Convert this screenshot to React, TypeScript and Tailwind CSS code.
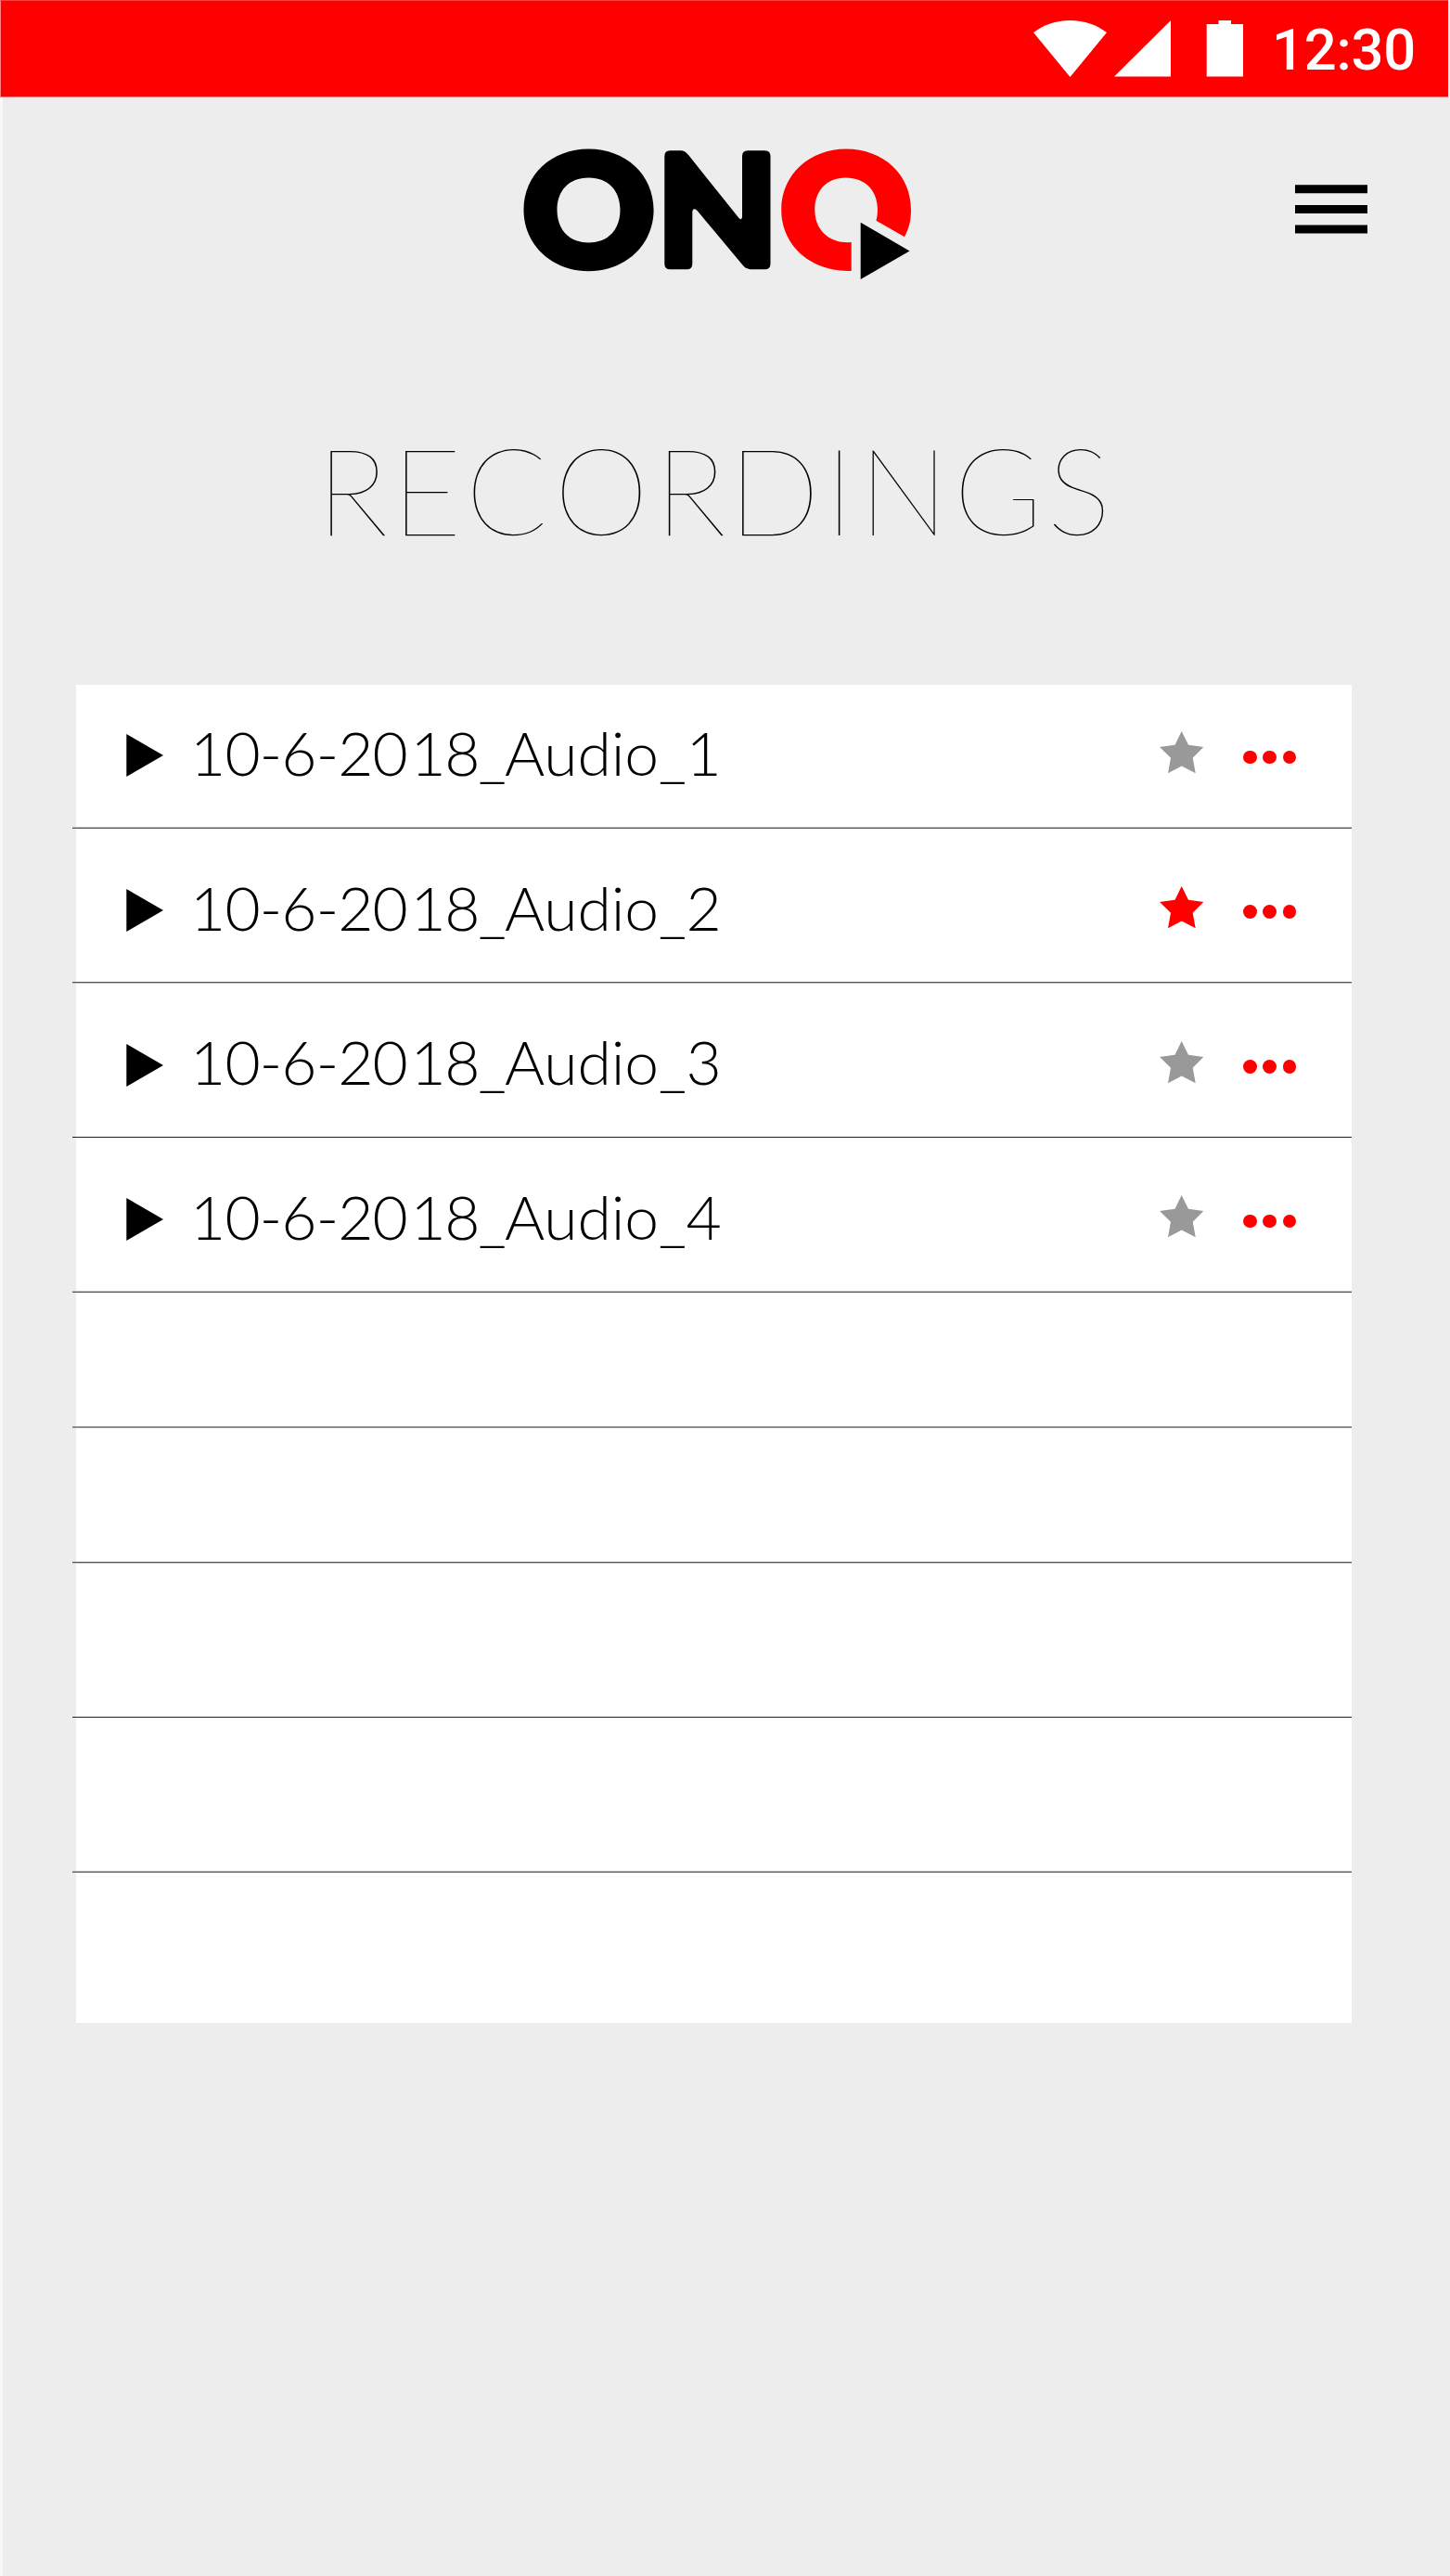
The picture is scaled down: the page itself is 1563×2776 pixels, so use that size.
const LETTER_O =
  "M84.500 20.600C124 20.600 154.600 48 154.600 86.300C154.600 124 124 152.200 84.500 152.200C45 152.200 14.500 124 14.500 86.300C14.500 48 45 20.600 84.500 20.600ZM84.500 51.400C63 51.400 50.500 65.500 50.500 86.300C50.500 107 63 121.400 84.500 121.400C106 121.400 118.500 107 118.500 86.300C118.500 65.500 106 51.400 84.500 51.400Z";

function StatusBar() {
  return (
    <div className="h-[105px] bg-[#f6f6f6]">
      <div className="flex h-[105px] w-[1561px] items-start border-y border-l border-b-[#ff8080] border-l-[#ff8080] border-t-[#ff4040] bg-[#ff0000] pl-[1113px] pt-[21px]">
        <svg className="h-[61px] w-[79px]" viewBox="0 0 79 61" fill="white">
          <path d="M0 13C11 5 24 0 39.500 0C55 0 68 5 79 13L39.500 61Z" />
        </svg>
        <svg className="ml-[8px] h-[61px] w-[61px]" viewBox="0 0 61 61" fill="white">
          <path d="M0 60.500L61 0V60.500Z" />
        </svg>
        <svg className="ml-[38px] h-[61px] w-[41px]" viewBox="0 0 41 61" fill="white">
          <path d="M0.700 4H13.500V0H27V4H40V60.500H0.700Z" />
        </svg>
        <span className="ml-[30px] mt-[-4px] whitespace-nowrap font-['Roboto'] text-[61.5px] font-medium leading-[72px] tracking-[-0.2px] text-white">
          12:30
        </span>
      </div>
    </div>
  );
}

function Logo() {
  return (
    <svg className="h-[180px] w-[450px]" viewBox="0 0 450 180" role="img" aria-label="ONQ">
      <path fillRule="evenodd" d={LETTER_O} />
      <path d="M172.300 22.300H183C187.500 22.300 189.500 24 192.500 27.500L246.500 95C248 97 250 96.500 250 93V28.300Q250 22.300 256 22.300H274.500Q280.500 22.300 280.500 28.300V144.200Q280.500 150.200 274.500 150.200H261C256 150.200 253 149 250 145L202 87.500C199 84 196.300 84.500 196.300 89V144.200Q196.300 150.200 190.300 150.200H172.300Q166.300 150.200 166.300 144.200V28.300Q166.300 22.300 172.300 22.300Z" />
      <path
        fill="#ff0000"
        d="M367.700 152V121C345 123 328.300 109 328.300 86C328.300 65.500 341 51.400 361.500 51.400C383 51.400 396 65.500 396 86Q396 92 394.500 97.700L425 115.300C430 106 432 97 432 86C432 48 402 20.600 362 20.600C323 20.600 292.200 48 292.200 86C292.200 124 323 153 367.700 152Z"
      />
      <path d="M377.700 99.700L430.500 130.500L377.700 161Z" />
    </svg>
  );
}

function Header() {
  return (
    <header className="flex items-start pl-[547px] pt-[35px]">
      <Logo />
      <button aria-label="Menu" className="ml-[395.5px] mt-[59.4px] w-[78.5px]">
        <svg className="block h-[53px] w-full" viewBox="0 0 78.5 53" preserveAspectRatio="none">
          <path d="M0 0.300H78.500V9.300H0ZM0 22H78.500V31H0ZM0 43.600H78.500V52.600H0Z" />
        </svg>
      </button>
    </header>
  );
}

function Recording({ index, starred }: { index: number; starred: boolean }) {
  return (
    <>
      <svg className="mt-[19.3px] h-[46px] w-[40px]" viewBox="0 0 40 46">
        <path d="M0.300 0L40 23L0.300 46Z" />
      </svg>
      <span className="ml-[29px] mt-[-2px] w-[1045px] whitespace-nowrap font-['Lato'] text-[66px] font-light leading-[81px] text-black">
        <span className="tracking-[-0.9px]">10-6-2</span>
        <span className="tracking-[2.6px]">0</span>
        <span className="tracking-[-1.6px]">18_</span>
        <span className="tracking-[-0.1px]">Audio_{index}</span>
      </span>
      <svg className="mt-[16.3px] h-[46px] w-[48px]" viewBox="0 0 48 46" fill={starred ? "#ff0000" : "#999999"}>
        <path d="M23.700 0L31 14.800L47.300 17L35.700 28.700L38.700 45.300L23.700 37.500L9 45.300L12 28.700L0 17L16.500 14.800Z" />
      </svg>
      <span className="ml-[42px] mt-[36.6px] flex gap-[6.6px]">
        <span className="size-[14.7px] rounded-full bg-[#ff0000]" />
        <span className="size-[14.7px] rounded-full bg-[#ff0000]" />
        <span className="size-[14.7px] rounded-full bg-[#ff0000]" />
      </span>
    </>
  );
}

const LINE = {
  low: "h-[2px] border-b border-[#555555] bg-[#bdbdbd]",
  high: "h-[2px] border-t border-[#555555] bg-[#bdbdbd]",
  even: "h-[2px] bg-[#8c8c8c]",
  crisp: "h-px bg-[#1f1f1f]",
};

const ROWS = [
  { box: "h-[155px] pt-[34px]", line: LINE.low, index: 1 },
  { box: "h-[167px] pt-[45.67px]", line: LINE.high, index: 2, starred: true },
  { box: "h-[166px] pt-[45.33px]", line: LINE.crisp, index: 3 },
  { box: "h-[167px] pt-[46px]", line: LINE.low, index: 4 },
  { box: "h-[146px]", line: LINE.even },
  { box: "h-[146px]", line: LINE.high },
  { box: "h-[166px]", line: LINE.crisp },
  { box: "h-[167px]", line: LINE.low },
  { box: "h-[162px]", line: "" },
];

export default function App() {
  return (
    <div className="h-[2776px] w-[1563px] overflow-hidden bg-[#ededed]">
      <StatusBar />
      <main className="h-[2671px] border-l-3 border-[#f8f8f8]">
        <Header />
        <h1 className="mt-[117px] whitespace-nowrap pl-[338.3px] font-['Lato'] text-[130px] font-thin leading-[180px] text-black [font-kerning:none]">
          <span className="tracking-[4px]">RE</span>
          <span className="tracking-[6.6px]">CO</span>
          <span className="tracking-[2.5px]">R</span>
          <span className="tracking-[5px]">DINGS</span>
        </h1>
        <ul className="ml-[79px] mt-[121px] w-[1375.2px] bg-white">
          {ROWS.map((row, i) => (
            <li key={i} className={row.box + " relative flex items-start pl-[54px]"}>
              {row.index && <Recording index={row.index} starred={!!row.starred} />}
              {row.line && <span className={row.line + " absolute bottom-0 left-[-4px] right-0"} />}
            </li>
          ))}
        </ul>
      </main>
    </div>
  );
}
